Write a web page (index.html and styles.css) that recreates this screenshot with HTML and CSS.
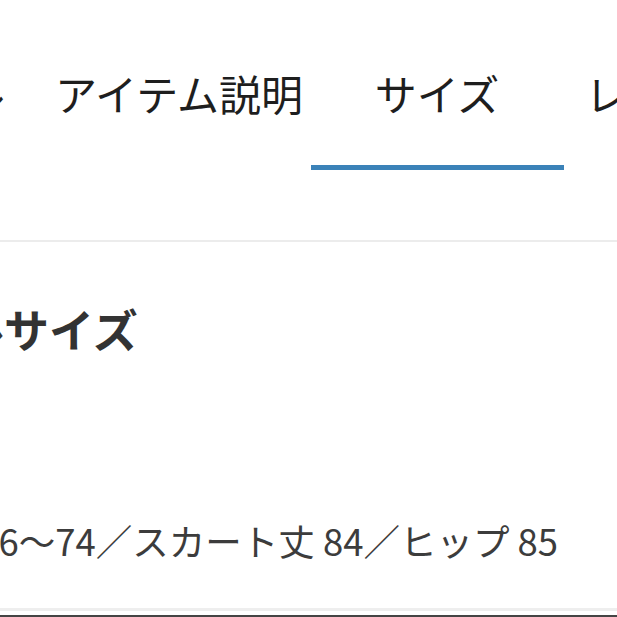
FILE: index.html
```html
<!DOCTYPE html>
<html lang="ja">
<head>
  <meta charset="UTF-8" />
  <title>サイズ</title>
  <link rel="stylesheet" href="styles.css">
</head>
<body>
  <div class="tabs">
    <div class="tab"><span class="tab-label">スタイル</span></div>
    <div class="tab"><span class="tab-label">アイテム説明</span></div>
    <div class="tab is-active"><span class="tab-label">サイズ</span></div>
    <div class="tab"><span class="tab-label">レビュー(3)</span></div>
  </div>

  <section class="size-info">
    <h2 class="size-title">モデルサイズ</h2>
    <p class="size-text">ウエスト 66〜74／スカート丈 84／ヒップ 85</p>
  </section>
  <div class="next-block"></div>
</body>
</html>
```

FILE: styles.css
```css
body {
  margin: 0;
  overflow: hidden;
  font-family: "Noto Sans CJK JP", "Noto Sans", sans-serif;
  background: #fff;
  color: #222;
}

/* tab bar */
.tabs {
  display: flex;
  margin-left: -208px;
  border-bottom: 2px solid #ececec;
  padding-bottom: 70px;
}

.tab {
  flex: 0 0 258px;
  display: flex;
  flex-direction: column;
  align-items: stretch;
  padding-top: 72px;
  text-align: center;
  white-space: nowrap;
}

.tab-label {
  font-size: 42px;
  line-height: 42px;
  color: #1e1e1e;
}

.tab::after {
  content: "";
  display: block;
  height: 5px;
  margin: 51px 2px 0 3px;
  background: transparent;
}

.tab.is-active::after {
  background: #3b82b8;
}

/* size block */
.size-info {
  padding-top: 64px;
  border-bottom: 3px solid #eeeeee;
  height: 369px;
  box-sizing: border-box;
}

.size-title {
  margin: 0 0 0 -131px;
  font-size: 45px;
  line-height: 45px;
  font-weight: bold;
  color: #333;
}

.size-text {
  margin: 171px 0 0 -176px;
  font-size: 36.5px;
  line-height: 37px;
  color: #3c3c3c;
  white-space: nowrap;
}

.next-block {
  margin-top: 4px;
  border-top: 2px solid #444;
}
```
